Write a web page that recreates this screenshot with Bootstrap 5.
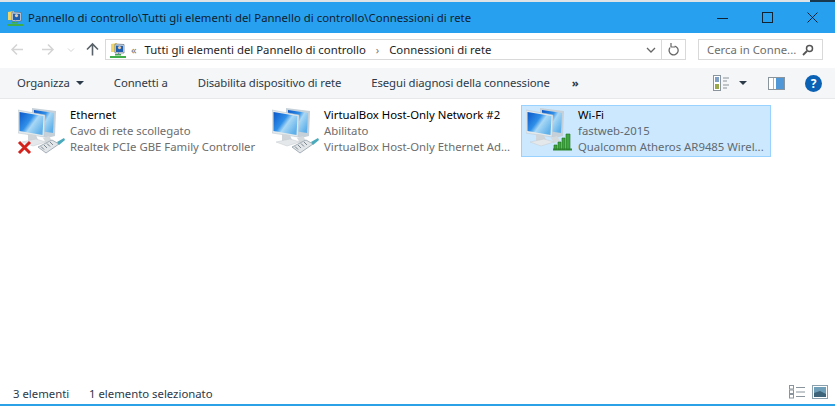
<!DOCTYPE html>
<html lang="it">
<head>
    <meta charset="UTF-8">
    <meta name="viewport" content="width=device-width, initial-scale=1.0">
    <title>Connessioni di rete</title>
    <link href="https://cdn.jsdelivr.net/npm/bootstrap@5.3.0/dist/css/bootstrap.min.css" rel="stylesheet">
    <style>
        html, body { height: 100%; }
        body {
            font-family: "Noto Sans", "Open Sans", sans-serif;
            font-size: 11.35px;
            line-height: 16px;
            color: #1e1e1e;
            background: #fff;
            overflow: hidden;
        }
        .win-frame { height: 406px; border-top: 2px solid #dfe3e6; border-bottom: 2px solid #2ba1e8; position: relative; }
        .corner-dark { position: absolute; right: 0; top: -2px; width: 25px; height: 2px; background: #17384f; }
        .title-bar { height: 31px; background: #27a0f0; padding-left: 7px; color: #10202c; }
        .title-text { margin-left: 5px; letter-spacing: .02px; }
        .win-btn { width: 45px; height: 31px; }
        .nav-row { height: 35px; padding: 6px 12px 8px 10px; }
        .nav-arrows { width: 95px; }
        .addr-box { height: 21px; width: 581px; border: 1px solid #d9d9d9; }
        .addr-crumbs { padding-left: 4px; }
        .addr-back { color: #777; font-size: 11px; margin: 0 8px 0 5px; }
        .addr-sep { color: #777; font-size: 11px; margin: 0 10px; }
        .addr-chevron { margin-right: 5px; }
        .addr-refresh { width: 24px; border-left: 1px solid #d9d9d9; height: 100%; }
        .search-box { height: 21px; width: 125px; margin-left: 12px; border: 1px solid #d9d9d9; padding: 0 8px; color: #6d6d6d; }
        .tool-bar { height: 31px; background: #f5f6f7; border-bottom: 1px solid #e6e8ea; padding-left: 17px; color: #2c3a4a; letter-spacing: -.1px; }
        .tool-item { margin-right: 30px; white-space: nowrap; }
        .tool-more { margin-left: -8px; font-weight: 700; }
        .caret-down { width: 0; height: 0; border-left: 4px solid transparent; border-right: 4px solid transparent; border-top: 4px solid #2c3a4a; }
        .caret-gap { margin-left: 6px; }
        .view-caret { margin: 0 21px 0 9px; }
        .pane-icon { margin-right: 20px; }
        .help-dot { width: 17px; height: 17px; border-radius: 50%; background: #0b62b5; color: #fff; font-weight: 700; font-size: 12px; line-height: 17px; text-align: center; margin-right: 13px; }
        .net-list { flex: 1 1 auto; padding: 6px 0 0 13px; gap: 4px; }
        .net-item { width: 250px; height: 52px; border: 1px solid transparent; padding-left: 4px; white-space: nowrap; }
        .net-item.is-selected { background: #cce8ff; border-color: #99d1ff; }
        .net-icon { width: 48px; height: 48px; flex: none; margin-right: 4px; }
        .plug-badge { position: absolute; right: -1px; bottom: 1px; }
        .fail-badge { position: absolute; left: -1px; bottom: 0; }
        .bars-badge { position: absolute; right: 1px; bottom: 4px; }
        .net-name { color: #000; }
        .net-sub { color: #6d6d6d; }
        .is-selected .net-sub { color: #5f6a72; }
        .status-bar { height: 26px; padding: 0 7px 0 13px; color: #2c3a4a; }
        .status-text { padding-top: 6px; }
        .status-count { width: 76px; }
        .status-icons { gap: 7px; padding-top: 2px; }
    </style>
</head>
<body>
    <svg width="0" height="0" class="d-block position-absolute">
        <defs>
            <linearGradient id="screenBlue" x1="0" y1="0" x2="1" y2="0.7">
                <stop offset="0" stop-color="#0a56c8"/>
                <stop offset="0.45" stop-color="#2f8fe8"/>
                <stop offset="0.62" stop-color="#a9d8f5"/>
                <stop offset="1" stop-color="#5fb0ea"/>
            </linearGradient>
            <symbol id="monitors" viewBox="0 0 48 48">
                <path d="M14 1l24 3-1 25-8 2-15-4z" fill="#c5d0d8"/>
                <path d="M16 3l20 3-1 20-19-3z" fill="url(#screenBlue)"/>
                <path d="M31 29l3 5-6 2-3-5z" fill="#d5dadd"/>
                <path d="M0 3l27 5-1 22-26-4z" fill="#e4e9ec" stroke="#b9c4cc" stroke-width=".5"/>
                <path d="M1.5 5l24 4-1 19-23-4z" fill="url(#screenBlue)"/>
                <path d="M10 27l8 1 2 5-10 1z" fill="#cfd5d9"/>
                <path d="M4 35l14-3 10 3-13 4z" fill="#e5e8ea" stroke="#c4cbd0" stroke-width=".5"/>
            </symbol>
            <symbol id="plug" viewBox="0 0 30 18">
                <path d="M1 11l14-7 7 4-13 9z" fill="#e2e6e9" stroke="#93a0aa" stroke-width=".8"/>
                <path d="M4 10.5l3 3M7 9l3 3M10 7.5l3 3M13 6l3 3" stroke="#7b8791" stroke-width="1"/>
                <path d="M20 6l7-4 1 2-6 5z" fill="#4aa9ba"/>
            </symbol>
            <symbol id="neticon" viewBox="0 0 16 16">
                <path d="M1 2l6-1v9H1z" fill="#f0d56a"/>
                <path d="M5 2l9 .5V11H5z" fill="#e8edf2" stroke="#5a6b80" stroke-width=".7"/>
                <path d="M6 3.5l7 .3V10H6z" fill="#1e5fb0"/>
                <circle cx="9.5" cy="5.6" r="1.6" fill="#e6c9a8"/>
                <path d="M5 12h6v1.5H5zM0 14h16v2H0z" fill="#3fae49"/>
                <path d="M8 10.5h1.2v2H8z" fill="#7a8a96"/>
            </symbol>
        </defs>
    </svg>

    <div class="win-frame d-flex flex-column">
        <div class="corner-dark"></div>

        <div class="title-bar d-flex align-items-center">
            <svg width="16" height="16"><use href="#neticon"/></svg>
            <span class="title-text flex-grow-1">Pannello di controllo\Tutti gli elementi del Pannello di controllo\Connessioni di rete</span>
            <div class="win-btn d-flex align-items-center justify-content-center">
                <svg width="11" height="11"><path d="M0 6.5h11" stroke="#123" stroke-width="1"/></svg>
            </div>
            <div class="win-btn d-flex align-items-center justify-content-center">
                <svg width="11" height="11"><rect x=".5" y=".5" width="10" height="10" fill="none" stroke="#123"/></svg>
            </div>
            <div class="win-btn d-flex align-items-center justify-content-center">
                <svg width="11" height="11"><path d="M.5.5l10 10M10.5.5l-10 10" stroke="#123"/></svg>
            </div>
        </div>

        <div class="nav-row d-flex align-items-center">
            <div class="nav-arrows d-flex align-items-center">
                <svg width="95" height="21">
                    <path d="M2 10.5h11M7 5.5l-5 5 5 5" fill="none" stroke="#d4d4d4" stroke-width="1.5"/>
                    <path d="M32 10.5h11M38 5.5l5 5-5 5" fill="none" stroke="#d4d4d4" stroke-width="1.5"/>
                    <path d="M58 9.5l3 3 3-3" fill="none" stroke="#d4d4d4"/>
                    <path d="M82.5 16.5V5M77 10.5l5.5-5.5 5.5 5.5" fill="none" stroke="#5a6269" stroke-width="1.6"/>
                </svg>
            </div>
            <div class="addr-box d-flex align-items-center">
                <div class="addr-crumbs d-flex align-items-center flex-grow-1">
                    <svg width="16" height="16"><use href="#neticon"/></svg>
                    <span class="addr-back">&laquo;</span>
                    <span>Tutti gli elementi del Pannello di controllo</span>
                    <span class="addr-sep">&rsaquo;</span>
                    <span>Connessioni di rete</span>
                </div>
                <svg class="addr-chevron" width="10" height="6"><path d="M1 1l4 4 4-4" fill="none" stroke="#666" stroke-width="1.3"/></svg>
                <div class="addr-refresh d-flex align-items-center justify-content-center">
                    <svg width="12" height="13"><path d="M3 3.5a4.5 4.5 0 1 0 5 0" fill="none" stroke="#666" stroke-width="1.3" transform="rotate(-20 6 7)"/><path d="M3 0v4h4" fill="none" stroke="#666" stroke-width="1.2"/></svg>
                </div>
            </div>
            <div class="search-box d-flex align-items-center justify-content-between">
                <span>Cerca in Conne...</span>
                <svg width="12" height="12"><circle cx="7.5" cy="4.5" r="3" fill="none" stroke="#555" stroke-width="1.5"/><path d="M5 7l-4 4" stroke="#555" stroke-width="1.8"/></svg>
            </div>
        </div>

        <div class="tool-bar d-flex align-items-center">
            <span class="tool-item d-flex align-items-center">Organizza<span class="caret-down caret-gap"></span></span>
            <span class="tool-item">Connetti a</span>
            <span class="tool-item">Disabilita dispositivo di rete</span>
            <span class="tool-item">Esegui diagnosi della connessione</span>
            <span class="tool-more">&raquo;</span>
            <div class="ms-auto d-flex align-items-center">
                <svg width="17" height="16"><rect x=".5" y=".5" width="7" height="15" fill="#fff" stroke="#8a949c"/><rect x="2" y="2" width="4" height="5" fill="#7f9fc4"/><rect x="2" y="9" width="4" height="5" fill="#9aa84a"/><path d="M10 3h6M10 6h4M10 10h6M10 13h4" stroke="#8a949c"/></svg>
                <span class="caret-down view-caret"></span>
                <svg class="pane-icon" width="17" height="13"><rect x=".5" y=".5" width="16" height="12" fill="#fff" stroke="#8a949c"/><rect x="8" y="1" width="8" height="11" fill="#4f97d6"/><path d="M5.5 1v11" stroke="#aab2b8"/></svg>
                <div class="help-dot">?</div>
            </div>
        </div>

        <div class="net-list d-flex align-items-start">
            <div class="net-item d-flex align-items-center">
                <div class="net-icon position-relative">
                    <svg width="48" height="48"><use href="#monitors"/></svg>
                    <svg class="plug-badge" width="30" height="18"><use href="#plug"/></svg>
                    <svg class="fail-badge" width="15" height="15"><path d="M2 2l11 11M13 2L2 13" stroke="#d3211c" stroke-width="3"/></svg>
                </div>
                <div>
                    <div class="net-name">Ethernet</div>
                    <div class="net-sub">Cavo di rete scollegato</div>
                    <div class="net-sub">Realtek PCIe GBE Family Controller</div>
                </div>
            </div>
            <div class="net-item d-flex align-items-center">
                <div class="net-icon position-relative">
                    <svg width="48" height="48"><use href="#monitors"/></svg>
                    <svg class="plug-badge" width="30" height="18"><use href="#plug"/></svg>
                </div>
                <div>
                    <div class="net-name">VirtualBox Host-Only Network #2</div>
                    <div class="net-sub">Abilitato</div>
                    <div class="net-sub">VirtualBox Host-Only Ethernet Ad...</div>
                </div>
            </div>
            <div class="net-item is-selected d-flex align-items-center">
                <div class="net-icon position-relative">
                    <svg width="48" height="48"><use href="#monitors"/></svg>
                    <svg class="bars-badge" width="21" height="18"><path d="M1 15.5h19v2H1z" fill="#2e8b2e"/><path d="M2 12h3v4H2zM6 9h3v7H6zM10 5h3v11h-3zM14 1h4v15h-4z" fill="#3fa63f" stroke="#1f6d1f" stroke-width=".6"/></svg>
                </div>
                <div>
                    <div class="net-name">Wi-Fi</div>
                    <div class="net-sub">fastweb-2015</div>
                    <div class="net-sub">Qualcomm Atheros AR9485 Wirel...</div>
                </div>
            </div>
        </div>

        <div class="status-bar d-flex align-items-center">
            <span class="status-count status-text">3 elementi</span>
            <span class="status-text">1 elemento selezionato</span>
            <div class="ms-auto d-flex align-items-center status-icons">
                <svg width="16" height="14"><rect x=".5" y=".5" width="4" height="3.5" fill="none" stroke="#8a949c"/><rect x=".5" y="5" width="4" height="3.5" fill="none" stroke="#8a949c"/><rect x=".5" y="9.5" width="4" height="3.5" fill="none" stroke="#8a949c"/><path d="M7 2.5h9M7 7h9M7 11.5h9" stroke="#8a949c"/></svg>
                <svg width="16" height="14"><rect x=".5" y=".5" width="15" height="13" fill="#fff" stroke="#8aa0ad"/><rect x="2" y="2" width="12" height="10" fill="#6f9fb8"/><path d="M2 8l6-2 6 3v3H2z" fill="#3d6478"/></svg>
            </div>
        </div>
    </div>
</body>
</html>
